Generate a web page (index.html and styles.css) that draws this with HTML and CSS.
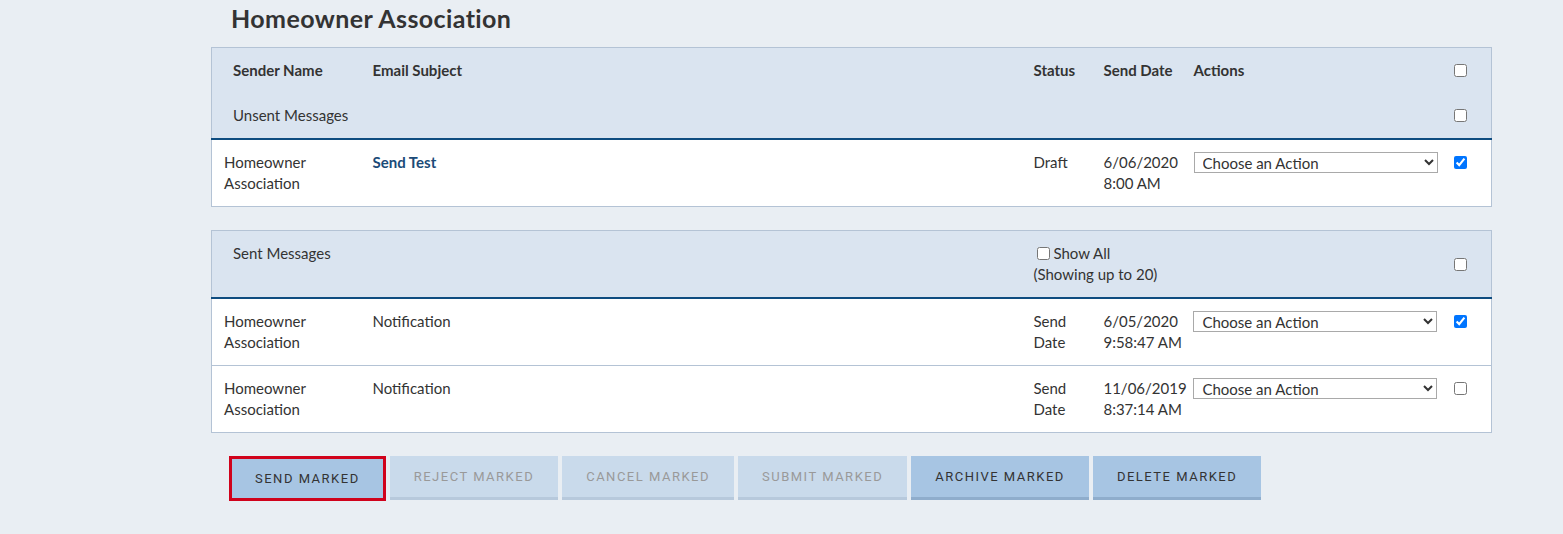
FILE: index.html
```html
<!DOCTYPE html>
<html lang="en">
<head>
  <meta charset="UTF-8" />
  <meta name="viewport" content="width=device-width, initial-scale=1.0"/>
  <title>Messages</title>
  <link rel="stylesheet" href="styles.css">
</head>
<body>
  <div class="page">
    <h1>Homeowner Association</h1>

    <table class="msg-table">
      <colgroup>
        <col class="c-sender"><col class="c-subject"><col class="c-status"><col class="c-date"><col class="c-actions"><col class="c-check">
      </colgroup>
      <thead>
        <tr class="head-row">
          <th class="first">Sender Name</th>
          <th>Email Subject</th>
          <th>Status</th>
          <th>Send Date</th>
          <th>Actions</th>
          <th><input type="checkbox"></th>
        </tr>
        <tr class="group-row last">
          <td class="first" colspan="5">Unsent Messages</td>
          <td><input type="checkbox"></td>
        </tr>
      </thead>
      <tbody>
        <tr>
          <td>Homeowner<br>Association</td>
          <td><a class="subject-link" href="#">Send Test</a></td>
          <td>Draft</td>
          <td class="date">6/06/2020<br>8:00 AM</td>
          <td><select><option>Choose an Action</option></select></td>
          <td><input type="checkbox" checked></td>
        </tr>
      </tbody>
    </table>

    <table class="msg-table">
      <colgroup>
        <col class="c-sender"><col class="c-subject"><col class="c-status"><col class="c-date"><col class="c-actions"><col class="c-check">
      </colgroup>
      <thead>
        <tr class="group-row last">
          <td class="first" colspan="2">Sent Messages</td>
          <td colspan="3"><label class="show-all"><input type="checkbox">Show All</label><br>(Showing up to 20)</td>
          <td class="mid"><input type="checkbox"></td>
        </tr>
      </thead>
      <tbody>
        <tr>
          <td>Homeowner<br>Association</td>
          <td>Notification</td>
          <td>Send<br>Date</td>
          <td class="date">6/05/2020<br>9:58:47 AM</td>
          <td><select><option>Choose an Action</option></select></td>
          <td><input type="checkbox" checked></td>
        </tr>
        <tr>
          <td>Homeowner<br>Association</td>
          <td>Notification</td>
          <td>Send<br>Date</td>
          <td class="date">11/06/2019<br>8:37:14 AM</td>
          <td><select><option>Choose an Action</option></select></td>
          <td><input type="checkbox"></td>
        </tr>
      </tbody>
    </table>

    <div class="button-bar">
      <button class="btn selected">Send Marked</button>
      <button class="btn" disabled>Reject Marked</button>
      <button class="btn" disabled>Cancel Marked</button>
      <button class="btn" disabled>Submit Marked</button>
      <button class="btn">Archive Marked</button>
      <button class="btn">Delete Marked</button>
    </div>
  </div>
</body>
</html>
```

FILE: styles.css
```css
body {
  margin: 0;
  padding: 0;
  background-color: #e9eef3;
  font-family: "Lato", "Open Sans", sans-serif;
  color: #333;
}

.page {
  width: 1281px;
  margin-left: 211px;
}

h1 {
  font-size: 25px;
  font-weight: 700;
  letter-spacing: 0.4px;
  margin: 3px 0 0 20px;
  height: 44px;
  line-height: 30px;
}

.msg-table {
  width: 1281px;
  border-collapse: collapse;
  table-layout: fixed;
  background-color: #fff;
  border: 1px solid #b4c3d5;
  margin-bottom: 23px;
  font-size: 15px;
  line-height: 21px;
}

.c-sender { width: 149px; }
.c-status { width: 70px; }
.c-date { width: 90px; }
.c-actions { width: 260px; }
.c-check { width: 50px; }

.msg-table th,
.msg-table td {
  padding: 12px 0 12px 12px;
  text-align: left;
  vertical-align: top;
}

.msg-table th {
  font-weight: 700;
}

.msg-table thead {
  background-color: #dae4f0;
}

.msg-table th.first,
.msg-table td.first {
  padding-left: 21px;
}

.msg-table .last td {
  border-bottom: 2px solid #0e4c80;
}

.msg-table .mid {
  vertical-align: middle;
}

.msg-table tbody tr + tr td {
  border-top: 1px solid #b4c3d5;
}

.msg-table .date {
  white-space: nowrap;
}

.msg-table td > input[type="checkbox"],
.msg-table th > input[type="checkbox"] {
  display: block;
  width: 13px;
  height: 13px;
  margin: 4px 0 0 0;
}

.msg-table .mid > input[type="checkbox"] {
  margin-top: 0;
}

.show-all input[type="checkbox"] {
  width: 13px;
  height: 13px;
  margin: 0 3px 0 4px;
  vertical-align: -1px;
}

.subject-link {
  color: #1b4b78;
  font-weight: 700;
  text-decoration: none;
}

select {
  display: block;
  width: 244px;
  height: 21px;
  font-family: inherit;
  font-size: 15px;
  color: #333;
  background-color: #fff;
  border: 1px solid #a9a9a9;
  padding: 0 4px;
}

.button-bar {
  display: flex;
  align-items: flex-start;
  gap: 4px;
  margin-left: 18px;
  margin-top: 3px;
}

.btn {
  height: 44px;
  padding: 0 24px;
  border: none;
  border-bottom: 3px solid #8fadcc;
  background-color: #a7c5e3;
  color: #333;
  font-family: "Roboto", sans-serif;
  font-size: 13px;
  letter-spacing: 1.5px;
  text-transform: uppercase;
}

.btn:disabled {
  background-color: #c9daeb;
  border-bottom-color: #b7c9dc;
  color: #999;
}

.btn.selected {
  height: 45px;
  border: 3px solid #d0021b;
  padding: 0 23px;
}
```
